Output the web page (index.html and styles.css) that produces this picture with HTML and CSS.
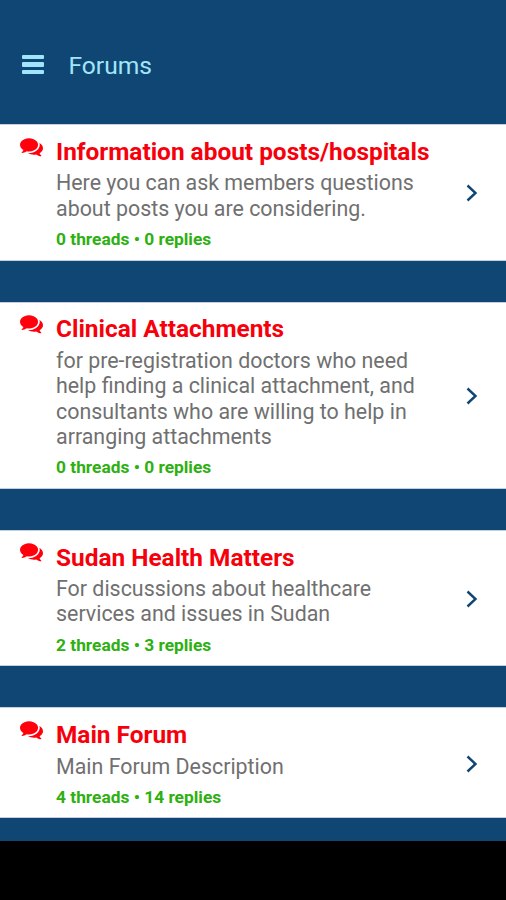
FILE: index.html
```html
<!DOCTYPE html>
<html lang="en">
<head>
    <meta charset="utf-8">
    <title>Forums</title>
    <link rel="stylesheet" href="styles.css">
</head>
<body>
    <!-- Shared icons -->
    <svg class="sprite">
        <symbol id="comments" viewBox="0 0 1792 1792">
            <path d="M1408 768q0 139-94 257t-256.500 186.500-353.500 68.500q-86 0-176-16-124 88-278 128-36 9-86 16h-3q-11 0-20.500-8t-11.500-21q-1-3-1-6.500t.5-6.500 2-6l2.500-5 3.500-5.500 4-5 4.500-5 4-4.500q5-6 23-25t26-29.500 22.500-29 25-38.500 20.500-44q-124-72-195-177t-71-224q0-139 94-257t256.500-186.500 353.500-68.500 353.500 68.500 256.500 186.500 94 257zm384 256q0 120-71 224.500t-195 176.500q10 24 20.500 44t25 38.500 22.500 29 26 29.500 23 25q1 1 4 4.500t4.500 5 4 5 3.500 5.500l2.500 5 2 6 .5 6.500-1 6.500q-3 14-13 22t-22 7q-50-7-86-16-154-40-278-128-90 16-176 16-271 0-472-132 58 4 88 4 161 0 309-45t264-129q125-92 192-212t67-254q0-77-23-152 129 71 204 178t75 230z"/>
        </symbol>
        <symbol id="chevron" viewBox="0 0 12 18">
            <path d="M1.500 1.500L9.500 9L1.500 16.500" fill="none" stroke="currentColor" stroke-width="2.400"/>
        </symbol>
    </svg>

    <header class="header">
        <div class="menu">
            <span></span>
            <span></span>
            <span></span>
        </div>
        <h1>Forums</h1>
    </header>

    <main class="forums">
        <div class="forum">
            <svg class="icon"><use href="#comments"/></svg>
            <div class="info">
                <h2>Information about posts/hospitals</h2>
                <p>Here you can ask members questions<br>about posts you are considering.</p>
                <div class="stats">0 threads • 0 replies</div>
            </div>
            <svg class="arrow"><use href="#chevron"/></svg>
        </div>

        <div class="forum">
            <svg class="icon"><use href="#comments"/></svg>
            <div class="info">
                <h2>Clinical Attachments</h2>
                <p>for pre-registration doctors who need<br>help finding a clinical attachment, and<br>consultants who are willing to help in<br>arranging attachments</p>
                <div class="stats">0 threads • 0 replies</div>
            </div>
            <svg class="arrow"><use href="#chevron"/></svg>
        </div>

        <div class="forum">
            <svg class="icon"><use href="#comments"/></svg>
            <div class="info">
                <h2>Sudan Health Matters</h2>
                <p>For discussions about healthcare<br>services and issues in Sudan</p>
                <div class="stats">2 threads • 3 replies</div>
            </div>
            <svg class="arrow"><use href="#chevron"/></svg>
        </div>

        <div class="forum">
            <svg class="icon"><use href="#comments"/></svg>
            <div class="info">
                <h2>Main Forum</h2>
                <p>Main Forum Description</p>
                <div class="stats">4 threads • 14 replies</div>
            </div>
            <svg class="arrow"><use href="#chevron"/></svg>
        </div>
    </main>

    <footer class="navbar"></footer>
</body>
</html>
```

FILE: styles.css
```css
* {
    box-sizing: border-box;
}
body {
    font-family: Roboto, sans-serif;
    background-color: #104674;
    margin: 0;
    height: 100vh;
    display: flex;
    flex-direction: column;
    overflow: hidden;
}
h1, h2, p {
    margin: 0;
}
.sprite {
    display: none;
}
.header {
    display: flex;
    align-items: center;
    height: 124px;
    padding: 7px 22px 0;
    color: #a0e6fa;
}
.header h1 {
    margin-left: 24.500px;
    font-size: 24.600px;
    font-weight: 400;
}
.menu {
    display: flex;
    flex-direction: column;
    gap: 3px;
    width: 22px;
    padding-bottom: 2px;
}
.menu span {
    height: 4.400px;
    background-color: #a0e6fa;
    border-radius: 1px;
}
.forums {
    flex: 1;
    display: flex;
    flex-direction: column;
    gap: 41px;
}
.forum {
    display: flex;
    align-items: center;
    padding: 11.800px 28px 9.500px 20px;
    background-color: #fff;
    border-top: 1px solid #c3d0e2;
    border-bottom: 1px solid #c3d0e2;
}
.icon {
    align-self: flex-start;
    width: 23px;
    height: 23px;
    margin-top: -2.300px;
    fill: #ff000c;
}
.info {
    flex: 1;
    margin-left: 13px;
}
.info h2 {
    color: #f6000c;
    font-size: 24.400px;
    font-weight: 700;
    line-height: 29.500px;
    white-space: nowrap;
}
.info p {
    color: #707070;
    font-size: 21.400px;
    line-height: 25.400px;
    padding-top: 3.900px;
    white-space: nowrap;
}
.stats {
    color: #2db010;
    font-size: 17.350px;
    font-weight: 700;
    line-height: 22px;
    padding-top: 7px;
}
.arrow {
    width: 12px;
    height: 18px;
    color: #104674;
}
.navbar {
    height: 59px;
    background-color: #000;
}
```
